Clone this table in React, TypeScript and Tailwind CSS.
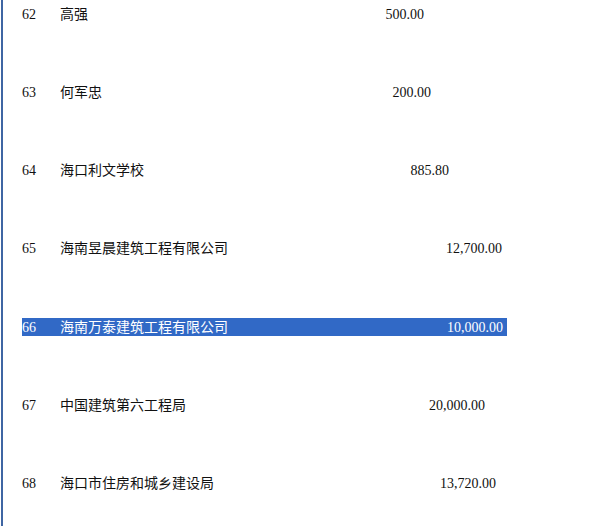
import React from 'react';

const rows = [
  { no: '62', name: '高强', amount: '500.00', w: 'w-[406px]' },
  { no: '63', name: '何军忠', amount: '200.00', w: 'w-[413px]' },
  { no: '64', name: '海口利文学校', amount: '885.80', w: 'w-[431px]' },
  { no: '65', name: '海南昱晨建筑工程有限公司', amount: '12,700.00', w: 'w-[484px]' },
  { no: '66', name: '海南万泰建筑工程有限公司', amount: '10,000.00', w: 'w-[485px]', selected: true },
  { no: '67', name: '中国建筑第六工程局', amount: '20,000.00', w: 'w-[467px]' },
  { no: '68', name: '海口市住房和城乡建设局', amount: '13,720.00', w: 'w-[478px]' },
];

const App = () => {
  return (
    <div className="w-[600px] h-[526px] overflow-hidden bg-white flex pl-[1px]">
      <div className="w-[2px] h-full bg-[#3f66a3]"></div>
      <div className="flex flex-col pt-[5px] pl-[19px] gap-[60.25px]">
        {rows.map((r) => (
          <div
            key={r.no}
            className={`${r.w} h-[18px] flex items-center pr-[4px] text-[14px] leading-none ${
              r.selected ? 'bg-[#3169c6] text-white' : 'text-[#111]'
            }`}
          >
            <span className="w-[38px] mt-[1px] font-['Liberation_Serif',serif]">{r.no}</span>
            <span className="-mt-[3px] font-['Noto_Sans_CJK_SC',sans-serif]">{r.name}</span>
            <span className="ml-auto mt-[1px] font-['Liberation_Serif',serif]">{r.amount}</span>
          </div>
        ))}
      </div>
    </div>
  );
};

export default App;
